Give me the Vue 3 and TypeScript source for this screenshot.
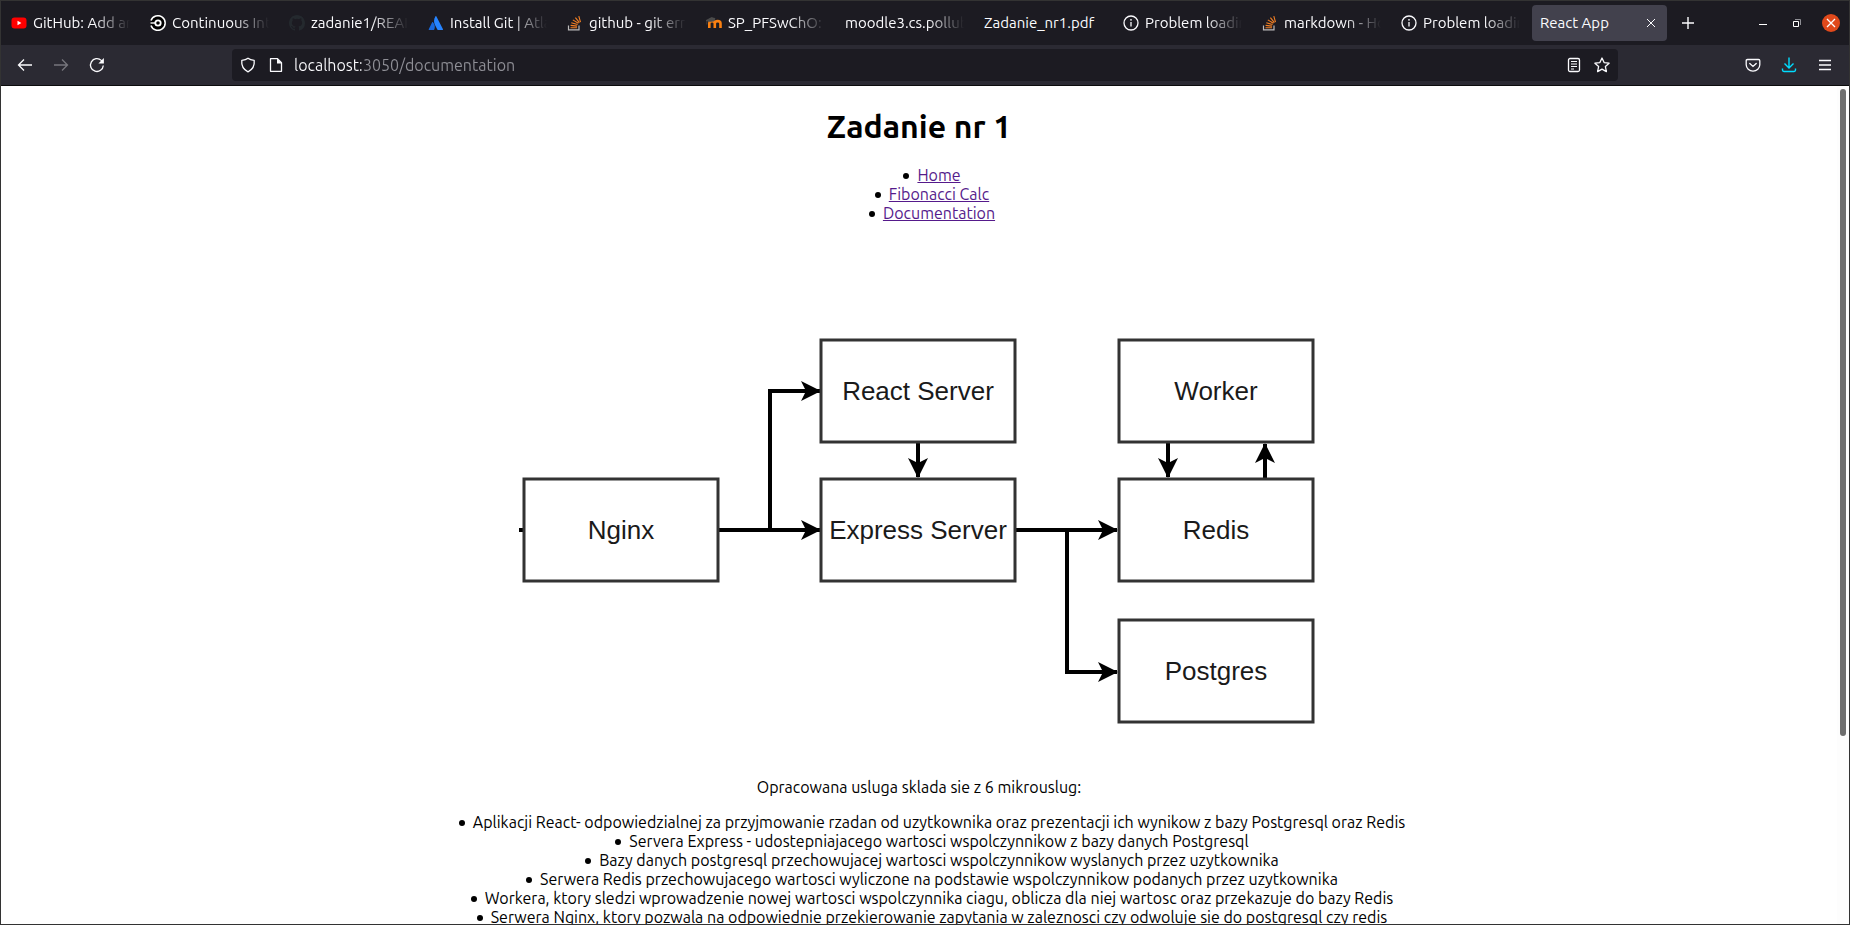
<script setup lang="ts">
import { ref } from 'vue'

type IconName = 'youtube' | 'circleci' | 'github' | 'atlassian' | 'stack' | 'moodle' | 'info' | null

interface Tab {
  title: string
  icon: IconName
  fade: boolean
}

interface DiagramNode {
  label: string
  x: number
  y: number
}

const tabs: Tab[] = [
  { title: 'GitHub: Add an', icon: 'youtube', fade: true },
  { title: 'Continuous Int', icon: 'circleci', fade: true },
  { title: 'zadanie1/REAI', icon: 'github', fade: true },
  { title: 'Install Git | Atla', icon: 'atlassian', fade: true },
  { title: 'github - git err', icon: 'stack', fade: true },
  { title: 'SP_PFSwChO:', icon: 'moodle', fade: true },
  { title: 'moodle3.cs.pollub', icon: null, fade: true },
  { title: 'Zadanie_nr1.pdf', icon: null, fade: false },
  { title: 'Problem loadin', icon: 'info', fade: true },
  { title: 'markdown - Ho', icon: 'stack', fade: true },
  { title: 'Problem loadin', icon: 'info', fade: true },
  { title: 'React App', icon: null, fade: false },
]
const activeTab = ref(11)
const address = ref('localhost:3050/documentation')

const links = [
  { text: 'Home', href: '#home' },
  { text: 'Fibonacci Calc', href: '#fibonacci' },
  { text: 'Documentation', href: '#documentation' },
]

const nodes: DiagramNode[] = [
  { label: 'Nginx', x: 5, y: 241 },
  { label: 'React Server', x: 302, y: 102 },
  { label: 'Express Server', x: 302, y: 241 },
  { label: 'Worker', x: 600, y: 102 },
  { label: 'Redis', x: 600, y: 241 },
  { label: 'Postgres', x: 600, y: 382 },
]

const services = [
  'Aplikacji React- odpowiedzialnej za przyjmowanie rzadan od uzytkownika oraz prezentacji ich wynikow z bazy Postgresql oraz Redis',
  'Servera Express - udostepniajacego wartosci wspolczynnikow z bazy danych Postgresql',
  'Bazy danych postgresql przechowujacej wartosci wspolczynnikow wyslanych przez uzytkownika',
  'Serwera Redis przechowujacego wartosci wyliczone na podstawie wspolczynnikow podanych przez uzytkownika',
  'Workera, ktory sledzi wprowadzenie nowej wartosci wspolczynnika ciagu, oblicza dla niej wartosc oraz przekazuje do bazy Redis',
  'Serwera Nginx, ktory pozwala na odpowiednie przekierowanie zapytania w zaleznosci czy odwoluje sie do postgresql czy redis',
]
</script>

<template>
  <div class="window">
    <header class="tabbar">
      <div class="tabs" role="tablist">
        <button
          v-for="(tab, i) in tabs"
          :key="i"
          type="button"
          role="tab"
          class="tab"
          :class="{ active: i === activeTab }"
          :aria-selected="i === activeTab"
          @click="activeTab = i"
        >
          <svg v-if="tab.icon === 'youtube'" class="fav" viewBox="0 0 16 16">
            <rect x="0.5" y="2.5" width="15" height="11" rx="3" fill="#f00" />
            <path d="M6.5 5.8v4.4L10.4 8z" fill="#fff" />
          </svg>
          <svg v-else-if="tab.icon === 'circleci'" class="fav" viewBox="0 0 16 16" fill="none">
            <circle cx="8" cy="8" r="7.6" fill="#000" />
            <path d="M1 5.6A7.3 7.3 0 1 1 1 10.4" stroke="#fff" stroke-width="1.5" />
            <path d="M.5 8h5" stroke="#fff" stroke-width="1.4" />
            <circle cx="8" cy="8" r="2.7" stroke="#fff" stroke-width="1.8" />
          </svg>
          <svg v-else-if="tab.icon === 'github'" class="fav" viewBox="0 0 16 16">
            <path
              fill="#24292e"
              d="M8 0C3.58 0 0 3.58 0 8c0 3.54 2.29 6.53 5.47 7.59.4.07.55-.17.55-.38 0-.19-.01-.82-.01-1.49-2.01.37-2.53-.49-2.69-.94-.09-.23-.48-.94-.82-1.13-.28-.15-.68-.52-.01-.53.63-.01 1.08.58 1.23.82.72 1.21 1.87.87 2.33.66.07-.52.28-.87.51-1.07-1.78-.2-3.64-.89-3.64-3.95 0-.87.31-1.59.82-2.15-.08-.2-.36-1.02.08-2.12 0 0 .67-.21 2.2.82a7.6 7.6 0 0 1 4 0c1.53-1.04 2.2-.82 2.2-.82.44 1.1.16 1.92.08 2.12.51.56.82 1.27.82 2.15 0 3.07-1.87 3.75-3.65 3.95.29.25.54.73.54 1.48 0 1.07-.01 1.93-.01 2.2 0 .21.15.46.55.38A8 8 0 0 0 16 8c0-4.42-3.58-8-8-8z"
            />
          </svg>
          <svg v-else-if="tab.icon === 'atlassian'" class="fav" viewBox="0 0 16 16">
            <path d="M5 7.2c-.2-.3-.6-.3-.8 0L.7 14.3q-.2.6.4.7h4.7q.4 0 .5-.4c1.1-2.2.5-5.5-1.3-7.4z" fill="#1868db" />
            <path d="M7.5 1.2c-1.9 3-1.8 6.2-.5 8.7l2.3 4.7q.2.4.6.4h4.7q.6-.2.4-.7L8.3 1.2q-.4-.6-.8 0z" fill="#2684ff" />
          </svg>
          <svg v-else-if="tab.icon === 'stack'" class="fav" viewBox="0 0 16 16" fill="none">
            <path d="M1.5 10.5v4.3h10.5v-4.3" stroke="#bcbbbb" stroke-width="1.2" />
            <path d="M3.5 12.7h6.5M3.6 10.4l6.5.7M4.3 7.7l6.3 1.8M5.8 4.9l5.6 3.4M8.4 2.6l4 5.1M11.8 1.1l1.7 6" stroke="#f48024" stroke-width="1.1" />
          </svg>
          <svg v-else-if="tab.icon === 'moodle'" class="fav" viewBox="0 0 16 16" fill="none">
            <path d="M3.3 13V8.5C3.3 5.3 8.8 5.3 8.8 8.5V13M8.8 8.5c0-3.2 5.7-3.2 5.7 0V13" stroke="#f98012" stroke-width="2.6" />
            <path d="M0 5.5 5.5 2.5l3.5 1-1 2.5-4 .7zM.8 5.5v4" fill="#4a4a4a" stroke="#555" stroke-width=".6" />
          </svg>
          <svg v-else-if="tab.icon === 'info'" class="fav" viewBox="0 0 16 16" fill="none">
            <circle cx="8" cy="8" r="7" stroke="#fbfbfe" stroke-width="1.3" />
            <path d="M8 7v4.5" stroke="#fbfbfe" stroke-width="1.3" />
            <circle cx="8" cy="4.8" r=".9" fill="#fbfbfe" />
          </svg>
          <span class="label" :class="{ fade: tab.fade }">{{ tab.title }}</span>
          <svg v-if="i === activeTab" class="tab-close" viewBox="0 0 10 10" fill="none">
            <path d="M1 1l8 8M9 1L1 9" stroke="#fbfbfe" />
          </svg>
        </button>
      </div>
      <button type="button" class="icon-btn new-tab" aria-label="New tab">
        <svg viewBox="0 0 16 16" fill="none"><path d="M8 2v12M2 8h12" stroke="#fbfbfe" stroke-width="1.4" /></svg>
      </button>
      <div class="window-controls">
        <button type="button" class="icon-btn" aria-label="Minimize">
          <svg viewBox="0 0 16 16" fill="none"><path d="M4 9.5h8" stroke="#fff" /></svg>
        </button>
        <button type="button" class="icon-btn" aria-label="Restore">
          <svg viewBox="0 0 16 16" fill="none">
            <path d="M4.5 6.5h5v5h-5z" stroke="#fff" />
            <path d="M6 4.5h5.5V10" stroke="#8f8f95" />
          </svg>
        </button>
        <button type="button" class="icon-btn close" aria-label="Close">
          <svg viewBox="0 0 18 18" fill="none"><path d="M5 5l8 8M13 5l-8 8" stroke="#fff" stroke-width="1.3" /></svg>
        </button>
      </div>
    </header>

    <nav class="toolbar" aria-label="Navigation">
      <div class="nav-buttons">
        <button type="button" class="icon-btn" aria-label="Back">
          <svg viewBox="0 0 16 16" fill="none"><path d="M15 8H1.8M7 2.5L1.5 8 7 13.5" stroke="#fbfbfe" stroke-width="1.3" /></svg>
        </button>
        <button type="button" class="icon-btn" aria-label="Forward" disabled>
          <svg viewBox="0 0 16 16" fill="none"><path d="M1 8h13.2M9 2.5L14.5 8 9 13.5" stroke="#77767d" stroke-width="1.3" /></svg>
        </button>
        <button type="button" class="icon-btn" aria-label="Reload">
          <svg viewBox="0 0 16 16" fill="none">
            <path d="M14.3 8.5A6.4 6.4 0 1 1 12.3 3.4L13.5 4.5" stroke="#fbfbfe" stroke-width="1.3" />
            <path d="M14.9 1v5.5H9.4z" fill="#fbfbfe" />
          </svg>
        </button>
      </div>
      <div class="urlbar">
        <svg class="url-icon" viewBox="0 0 16 16" fill="none">
          <path d="M8 1.2C6.5 2.5 4 3.2 1.8 3.3 1.3 8 3.2 12.5 8 14.8c4.8-2.3 6.7-6.8 6.2-11.5C12 3.2 9.5 2.5 8 1.2z" stroke="#fbfbfe" stroke-width="1.3" stroke-linejoin="round" />
        </svg>
        <svg class="url-icon page-icon" viewBox="0 0 16 16" fill="none">
          <path d="M3.5 1.7h6l4 4v8.6h-11V1.7z" stroke="#fbfbfe" stroke-width="1.3" stroke-linejoin="round" />
          <path d="M9 1.5v5h5z" fill="#fbfbfe" />
        </svg>
        <input v-model="address" class="address" type="text" aria-label="Address" spellcheck="false" />
        <button type="button" class="icon-btn" aria-label="Reader view">
          <svg viewBox="0 0 16 16" fill="none">
            <rect x="2.5" y="1.5" width="11" height="13" rx="1.5" stroke="#fbfbfe" stroke-width="1.3" />
            <path d="M5 4.5h6M5 7h6M5 9.5h6M5 12h3" stroke="#fbfbfe" />
          </svg>
        </button>
        <button type="button" class="icon-btn" aria-label="Bookmark this page">
          <svg viewBox="0 0 16 16" fill="none">
            <path d="M8 1l2.1 4.6 5 .6-3.7 3.4 1 5L8 12.1l-4.4 2.5 1-5L.9 6.200l5-.6z" stroke="#fbfbfe" stroke-width="1.3" stroke-linejoin="round" />
          </svg>
        </button>
      </div>
      <div class="tools">
        <button type="button" class="icon-btn" aria-label="Save to Pocket">
          <svg viewBox="0 0 16 16" fill="none">
            <path d="M2.5 2.5h11q1.3 0 1.3 1.3v4a6.8 6.3 0 0 1-13.6 0v-4q0-1.3 1.3-1.3z" stroke="#fbfbfe" stroke-width="1.3" />
            <path d="M4.8 6.5L8 9.4l3.2-2.9" stroke="#fbfbfe" stroke-width="1.4" stroke-linecap="round" />
          </svg>
        </button>
        <button type="button" class="icon-btn" aria-label="Downloads">
          <svg viewBox="0 0 16 16" fill="none">
            <path d="M8 .5v10.200M3.500 6.500L8 11l4.500-4.500M1.500 11.500v1.600q0 1.400 1.400 1.400h10.200q1.400 0 1.400-1.400v-1.600" stroke="#00ddff" stroke-width="1.4" />
          </svg>
        </button>
        <button type="button" class="icon-btn" aria-label="Menu">
          <svg viewBox="0 0 16 16" fill="none"><path d="M2 3.5h12M2 8h12M2 12.5h12" stroke="#fbfbfe" stroke-width="1.4" /></svg>
        </button>
      </div>
    </nav>

    <div class="viewport">
      <main class="page">
        <h1>Zadanie nr 1</h1>
        <ul>
          <li v-for="link in links" :key="link.href"><a :href="link.href">{{ link.text }}</a></li>
        </ul>
        <svg class="diagram" viewBox="0 1 800 523" role="img" aria-label="Service architecture">
          <defs>
            <marker id="arrow" viewBox="0 0 20 20" refX="19" refY="10" markerWidth="20" markerHeight="20" markerUnits="userSpaceOnUse" orient="auto">
              <path d="M20 10L0 0l5 10-5 10z" />
            </marker>
          </defs>
          <g class="edges">
            <path d="M0 292h4" />
            <path d="M199 292h102" marker-end="url(#arrow)" />
            <path d="M251 292V153h50" marker-end="url(#arrow)" />
            <path d="M399 204v35" marker-end="url(#arrow)" />
            <path d="M496 292h102" marker-end="url(#arrow)" />
            <path d="M548 292v142h50" marker-end="url(#arrow)" />
            <path d="M649 204v35" marker-end="url(#arrow)" />
            <path d="M746 241v-35" marker-end="url(#arrow)" />
          </g>
          <g v-for="node in nodes" :key="node.label" class="node">
            <rect :x="node.x" :y="node.y" width="194" height="102" />
            <text :x="node.x + 97" :y="node.y + 60">{{ node.label }}</text>
          </g>
        </svg>
        <p>Opracowana usluga sklada sie z 6 mikrouslug:</p>
        <ul>
          <li v-for="service in services" :key="service">{{ service }}</li>
        </ul>
      </main>
      <div class="scrollbar"><div class="thumb"></div></div>
    </div>
  </div>
</template>

<style>
body {
  margin: 0;
}
</style>

<style scoped>
.window {
  box-sizing: border-box;
  height: 100vh;
  display: flex;
  flex-direction: column;
  border: 1px solid #333333;
  background: #ffffff;
  overflow: hidden;
  font-family: "Ubuntu", "Noto Sans", "Open Sans", sans-serif;
}

button {
  border: 0;
  padding: 0;
  background: none;
  font: inherit;
}

.icon-btn {
  display: flex;
  align-items: center;
  justify-content: center;
  flex: none;
  width: 28px;
  height: 28px;
}

.icon-btn svg {
  width: 16px;
  height: 16px;
}

.tabbar {
  display: flex;
  align-items: center;
  flex: none;
  height: 44px;
  padding: 0 4px 0 2px;
  background: #1c1b22;
}

.tabs {
  display: flex;
  flex: 0 1 auto;
  min-width: 0;
  gap: 4px;
  height: 36px;
}

.tab {
  box-sizing: border-box;
  display: flex;
  align-items: center;
  flex: 0 1 135px;
  width: 135px;
  min-width: 0;
  gap: 6px;
  padding: 0 8px;
  border-radius: 4px;
  color: #fbfbfe;
  font-size: 15px;
  line-height: 20px;
  text-align: left;
}

.tab.active {
  background: #42414d;
}

.fav {
  flex: none;
  width: 16px;
  height: 16px;
}

.label {
  flex: 1;
  min-width: 0;
  overflow: hidden;
  white-space: nowrap;
}

.label.fade {
  mask-image: linear-gradient(to left, transparent, #000000 36px);
}

.tab-close {
  flex: none;
  width: 10px;
  height: 10px;
  margin-right: 3px;
}

.new-tab {
  margin-left: 7px;
}

.window-controls {
  display: flex;
  gap: 6px;
  margin-left: auto;
}

.close svg {
  width: 18px;
  height: 18px;
  border-radius: 50%;
  background: #e0491b;
}

.toolbar {
  display: flex;
  align-items: center;
  flex: none;
  height: 40px;
  padding: 0 10px;
  background: #2b2a33;
  border-bottom: 1px solid #0c0c0d;
}

.nav-buttons,
.tools {
  display: flex;
  gap: 8px;
}

.urlbar {
  box-sizing: border-box;
  display: flex;
  align-items: center;
  flex: 1;
  height: 32px;
  margin-left: 121px;
  margin-right: 121px;
  padding: 0 2px 0 8px;
  border-radius: 4px;
  background: #1c1b22;
}

.url-icon {
  flex: none;
  width: 16px;
  height: 16px;
}

.page-icon {
  margin-left: 12px;
}

.address {
  flex: 1;
  min-width: 0;
  margin-left: 10px;
  padding: 0;
  border: 0;
  outline: 0;
  font-family: inherit;
  font-size: 16px;
  line-height: 24px;
  color: transparent;
  background: linear-gradient(to right, #fbfbfe 67px, #8f8f96 67px);
  background-clip: text;
}

.viewport {
  display: flex;
  flex: 1;
  min-height: 0;
}

.page {
  flex: 1;
  min-width: 0;
  padding: 0 8px;
  overflow: hidden;
  color: #000000;
  font-size: 16px;
  line-height: 19px;
  text-align: center;
}

h1 {
  margin: 21px 0;
  font-size: 32px;
  line-height: 38px;
}

ul {
  margin: 16px 0;
  padding-left: 40px;
  list-style: none;
}

li {
  display: flex;
  align-items: center;
  width: fit-content;
  margin: 0 auto;
}

li::before {
  content: "";
  flex: none;
  width: 6px;
  height: 6px;
  margin-left: -14px;
  margin-right: 8px;
  border-radius: 50%;
  background: #000000;
}

a {
  color: #551a8b;
}

.diagram {
  display: block;
  width: 800px;
  max-width: 100%;
  margin: 0 auto;
}

.edges path {
  fill: none;
  stroke: #000000;
  stroke-width: 4px;
}

.node rect {
  fill: #ffffff;
  stroke: #333333;
  stroke-width: 3px;
}

.node text {
  fill: #1a1a1a;
  font-family: "Liberation Sans", Arial, sans-serif;
  font-size: 26px;
  text-anchor: middle;
}

p {
  margin: 16px 0;
}

.scrollbar {
  flex: none;
  width: 12px;
  padding-top: 3px;
  box-sizing: border-box;
  background: #fdfdfd;
}

.thumb {
  width: 6px;
  height: 77.5%;
  margin: 0 auto;
  border-radius: 3px;
  background: #6e6e6e;
}
</style>
